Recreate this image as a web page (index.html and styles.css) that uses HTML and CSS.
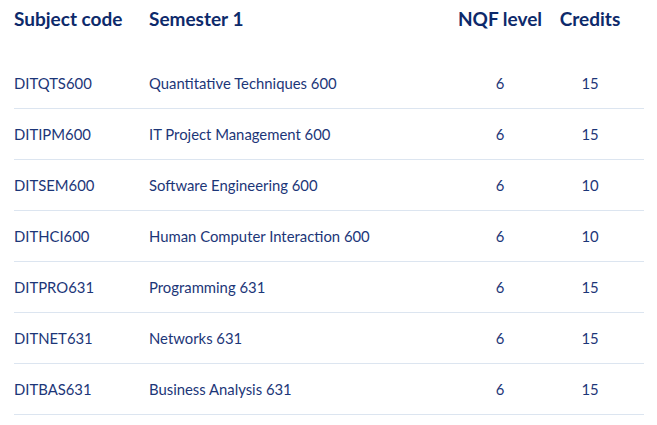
FILE: index.html
```html
<!DOCTYPE html>
<html>
<head>
<meta charset="utf-8">
<link rel="stylesheet" href="styles.css">
</head>
<body>
<div class="table">
  <div class="row head">
    <div class="c1">Subject code</div><div class="c2">Semester 1</div><div class="c3">NQF level</div><div class="c4">Credits</div>
  </div>
  <div class="row">
    <div class="c1">DITQTS600</div><div class="c2">Quantitative Techniques 600</div><div class="c3">6</div><div class="c4">15</div>
  </div>
  <div class="row">
    <div class="c1">DITIPM600</div><div class="c2">IT Project Management 600</div><div class="c3">6</div><div class="c4">15</div>
  </div>
  <div class="row">
    <div class="c1">DITSEM600</div><div class="c2">Software Engineering 600</div><div class="c3">6</div><div class="c4">10</div>
  </div>
  <div class="row">
    <div class="c1">DITHCI600</div><div class="c2">Human Computer Interaction 600</div><div class="c3">6</div><div class="c4">10</div>
  </div>
  <div class="row">
    <div class="c1">DITPRO631</div><div class="c2">Programming 631</div><div class="c3">6</div><div class="c4">15</div>
  </div>
  <div class="row">
    <div class="c1">DITNET631</div><div class="c2">Networks 631</div><div class="c3">6</div><div class="c4">15</div>
  </div>
  <div class="row">
    <div class="c1">DITBAS631</div><div class="c2">Business Analysis 631</div><div class="c3">6</div><div class="c4">15</div>
  </div>
</div>
</body>
</html>
```
FILE: styles.css
```css
html, body {
  margin: 0;
  padding: 0;
  background: #ffffff;
}
body {
  font-family: Lato, "Open Sans", sans-serif;
  color: #1c3678;
}
.table {
  width: 630px;
  margin-left: 14px;
}
.row {
  display: grid;
  grid-template-columns: 135px 307px 88px 92px;
  align-items: center;
  height: 50px;
  border-bottom: 1px solid #dce5f0;
  font-size: 14.85px;
}
.row.head {
  height: 36px;
  border-bottom: none;
  padding-bottom: 22px;
  font-size: 19px;
  font-weight: 700;
  color: #0d2a6b;
}
.c3, .c4 {
  text-align: center;
}
```
